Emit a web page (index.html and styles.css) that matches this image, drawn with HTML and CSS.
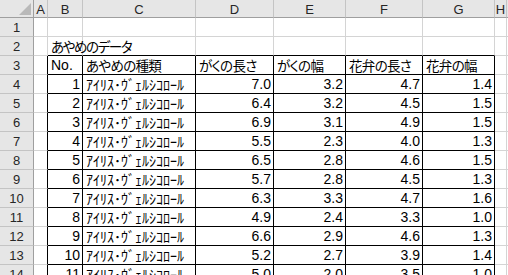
FILE: index.html
```html
<!DOCTYPE html>
<html lang="ja">
<head>
<meta charset="utf-8">
<title>あやめのデータ</title>
<link rel="stylesheet" href="styles.css">
</head>
<body>
<div class="sheet">
  <!-- column headers -->
  <div class="corner"><svg class="tri" width="12" height="12" viewBox="0 0 12 12"><polygon points="12,0 12,12 0,12" fill="#b9b9b9"/></svg></div>
  <div class="ch">A</div><div class="ch">B</div><div class="ch">C</div><div class="ch">D</div><div class="ch">E</div><div class="ch">F</div><div class="ch">G</div><div class="ch">H</div><div class="ch last"></div>

  <!-- row 1 -->
  <div class="rh">1</div>
  <div class="c"></div><div class="c"></div><div class="c"></div><div class="c"></div><div class="c"></div><div class="c"></div><div class="c"></div><div class="c"></div><div class="c last"></div>

  <!-- row 2 -->
  <div class="rh">2</div>
  <div class="c"></div>
  <div class="c over tt"><span class="jp title">あやめのデータ</span></div>
  <div class="c tt"></div><div class="c tt"></div><div class="c tt"></div><div class="c tt"></div><div class="c tt"></div>
  <div class="c"></div><div class="c last"></div>

  <!-- row 3 -->
  <div class="rh">3</div>
  <div class="c tl"></div>
  <div class="c tb">No.</div>
  <div class="c tb"><span class="jp">あやめの種類</span></div>
  <div class="c tb"><span class="jp">がくの長さ</span></div>
  <div class="c tb"><span class="jp">がくの幅</span></div>
  <div class="c tb"><span class="jp">花弁の長さ</span></div>
  <div class="c tb"><span class="jp">花弁の幅</span></div>
  <div class="c"></div><div class="c last"></div>

  <!-- row 4 -->
  <div class="rh">4</div>
  <div class="c tl"></div>
  <div class="c tb num">1</div><div class="c tb kana">ｱｲﾘｽ･ｳﾞｪﾙｼｺﾛｰﾙ</div>
  <div class="c tb num">7.0</div><div class="c tb num">3.2</div><div class="c tb num">4.7</div><div class="c tb num">1.4</div>
  <div class="c"></div><div class="c last"></div>

  <!-- row 5 -->
  <div class="rh">5</div>
  <div class="c tl"></div>
  <div class="c tb num">2</div><div class="c tb kana">ｱｲﾘｽ･ｳﾞｪﾙｼｺﾛｰﾙ</div>
  <div class="c tb num">6.4</div><div class="c tb num">3.2</div><div class="c tb num">4.5</div><div class="c tb num">1.5</div>
  <div class="c"></div><div class="c last"></div>

  <!-- row 6 -->
  <div class="rh">6</div>
  <div class="c tl"></div>
  <div class="c tb num">3</div><div class="c tb kana">ｱｲﾘｽ･ｳﾞｪﾙｼｺﾛｰﾙ</div>
  <div class="c tb num">6.9</div><div class="c tb num">3.1</div><div class="c tb num">4.9</div><div class="c tb num">1.5</div>
  <div class="c"></div><div class="c last"></div>

  <!-- row 7 -->
  <div class="rh">7</div>
  <div class="c tl"></div>
  <div class="c tb num">4</div><div class="c tb kana">ｱｲﾘｽ･ｳﾞｪﾙｼｺﾛｰﾙ</div>
  <div class="c tb num">5.5</div><div class="c tb num">2.3</div><div class="c tb num">4.0</div><div class="c tb num">1.3</div>
  <div class="c"></div><div class="c last"></div>

  <!-- row 8 -->
  <div class="rh">8</div>
  <div class="c tl"></div>
  <div class="c tb num">5</div><div class="c tb kana">ｱｲﾘｽ･ｳﾞｪﾙｼｺﾛｰﾙ</div>
  <div class="c tb num">6.5</div><div class="c tb num">2.8</div><div class="c tb num">4.6</div><div class="c tb num">1.5</div>
  <div class="c"></div><div class="c last"></div>

  <!-- row 9 -->
  <div class="rh">9</div>
  <div class="c tl"></div>
  <div class="c tb num">6</div><div class="c tb kana">ｱｲﾘｽ･ｳﾞｪﾙｼｺﾛｰﾙ</div>
  <div class="c tb num">5.7</div><div class="c tb num">2.8</div><div class="c tb num">4.5</div><div class="c tb num">1.3</div>
  <div class="c"></div><div class="c last"></div>

  <!-- row 10 -->
  <div class="rh">10</div>
  <div class="c tl"></div>
  <div class="c tb num">7</div><div class="c tb kana">ｱｲﾘｽ･ｳﾞｪﾙｼｺﾛｰﾙ</div>
  <div class="c tb num">6.3</div><div class="c tb num">3.3</div><div class="c tb num">4.7</div><div class="c tb num">1.6</div>
  <div class="c"></div><div class="c last"></div>

  <!-- row 11 -->
  <div class="rh">11</div>
  <div class="c tl"></div>
  <div class="c tb num">8</div><div class="c tb kana">ｱｲﾘｽ･ｳﾞｪﾙｼｺﾛｰﾙ</div>
  <div class="c tb num">4.9</div><div class="c tb num">2.4</div><div class="c tb num">3.3</div><div class="c tb num">1.0</div>
  <div class="c"></div><div class="c last"></div>

  <!-- row 12 -->
  <div class="rh">12</div>
  <div class="c tl"></div>
  <div class="c tb num">9</div><div class="c tb kana">ｱｲﾘｽ･ｳﾞｪﾙｼｺﾛｰﾙ</div>
  <div class="c tb num">6.6</div><div class="c tb num">2.9</div><div class="c tb num">4.6</div><div class="c tb num">1.3</div>
  <div class="c"></div><div class="c last"></div>

  <!-- row 13 -->
  <div class="rh">13</div>
  <div class="c tl"></div>
  <div class="c tb num">10</div><div class="c tb kana">ｱｲﾘｽ･ｳﾞｪﾙｼｺﾛｰﾙ</div>
  <div class="c tb num">5.2</div><div class="c tb num">2.7</div><div class="c tb num">3.9</div><div class="c tb num">1.4</div>
  <div class="c"></div><div class="c last"></div>

  <!-- row 14 -->
  <div class="rh">14</div>
  <div class="c tl"></div>
  <div class="c tb num">11</div><div class="c tb kana">ｱｲﾘｽ･ｳﾞｪﾙｼｺﾛｰﾙ</div>
  <div class="c tb num">5.0</div><div class="c tb num">2.0</div><div class="c tb num">3.5</div><div class="c tb num">1.0</div>
  <div class="c"></div><div class="c last"></div>
</div>
</body>
</html>
```

FILE: styles.css
```css
html, body {
  margin: 0;
  padding: 0;
  background: #ffffff;
  overflow: hidden;
}

.sheet {
  display: grid;
  grid-template-columns: 34px 14px 35px 113px 78px 72px 77px 72px 12px 40px;
  grid-template-rows: 18px repeat(14, 19px);
  width: 508px;
  height: 275px;
  overflow: hidden;
  font-family: "Liberation Sans", "Noto Sans CJK JP", sans-serif;
  font-size: 14px;
  color: #000;
}

.sheet > div {
  box-sizing: border-box;
  min-width: 0;
}

/* header cells */
.corner {
  background: #e6e6e6;
  border-right: 1px solid #9f9f9f;
  border-bottom: 1px solid #9f9f9f;
  display: flex;
  align-items: flex-end;
  justify-content: flex-end;
  padding: 0 2px 2px 0;
}

.tri {
  display: block;
}

.ch {
  background: #e6e6e6;
  border-right: 1px solid #c4c4c4;
  border-bottom: 1px solid #9f9f9f;
  font-family: "Liberation Sans", sans-serif;
  font-size: 13px;
  color: #262626;
  display: flex;
  align-items: center;
  justify-content: center;
  line-height: 1;
  padding-top: 1px;
}

.rh {
  background: #e6e6e6;
  border-right: 1px solid #9f9f9f;
  border-bottom: 1px solid #c4c4c4;
  font-family: "Liberation Sans", sans-serif;
  font-size: 13px;
  color: #262626;
  display: flex;
  align-items: center;
  justify-content: center;
  line-height: 1;
  padding-top: 1px;
}

/* ordinary cells */
.c {
  border-right: 1px solid #d4d4d4;
  border-bottom: 1px solid #d4d4d4;
  display: flex;
  align-items: flex-end;
  padding: 0 2px 1px 3px;
  line-height: 16px;
  white-space: nowrap;
}

.last {
  border-right: none;
}

.over {
  overflow: visible;
  position: relative;
  z-index: 1;
}

.jp {
  font-family: "Noto Sans CJK JP", sans-serif;
  font-size: 13.5px;
  font-feature-settings: "palt";
  letter-spacing: -0.7px;
}

.title {
  letter-spacing: -1.4px;
}

.tt {
  border-bottom: 1px solid #000;
}

.tl {
  border-right: 1px solid #000;
}

.tb {
  border-right: 1px solid #000;
  border-bottom: 1px solid #000;
  overflow: hidden;
}

.num {
  justify-content: flex-end;
  padding-right: 2px;
}

.kana {
  font-family: "Noto Sans CJK JP", sans-serif;
}
```
